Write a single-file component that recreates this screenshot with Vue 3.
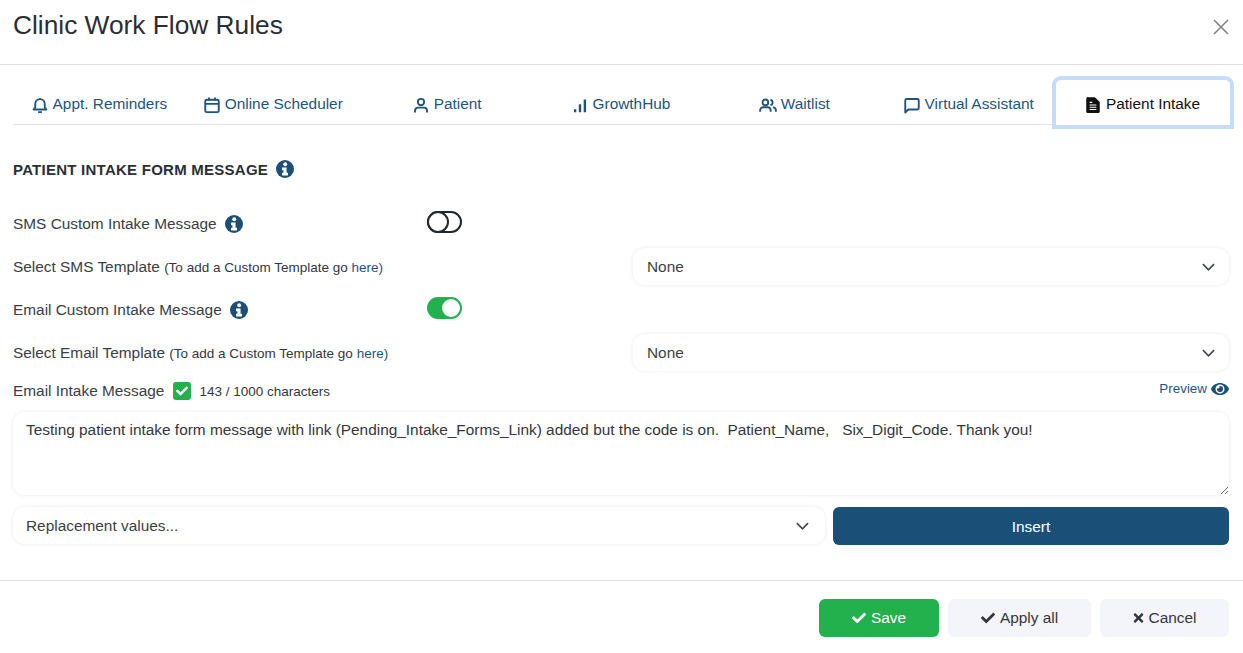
<script setup>
const tabs = [
  { label: 'Appt. Reminders', icon: 'bell' },
  { label: 'Online Scheduler', icon: 'calendar' },
  { label: 'Patient', icon: 'person' },
  { label: 'GrowthHub', icon: 'bars' },
  { label: 'Waitlist', icon: 'people' },
  { label: 'Virtual Assistant', icon: 'chat' },
  { label: 'Patient Intake', icon: 'doc', active: true }
]

const checkPath = 'M173.898 439.404l-166.4-166.4c-9.997-9.997-9.997-26.206 0-36.204l36.203-36.204c9.997-9.998 26.207-9.998 36.204 0L192 312.69 432.095 72.596c9.997-9.997 26.207-9.997 36.204 0l36.203 36.204c9.997 9.997 9.997 26.206 0 36.204l-294.4 294.401c-9.998 9.997-26.207 9.997-36.204-.001z'
const timesPath = 'M242.72 256l100.07-100.07c12.28-12.28 12.28-32.19 0-44.48l-22.24-22.24c-12.28-12.28-32.19-12.28-44.48 0L176 189.28 75.93 89.21c-12.28-12.28-32.19-12.28-44.48 0L9.21 111.45c-12.28 12.28-12.28 32.19 0 44.48L109.28 256 9.21 356.07c-12.28 12.28-12.28 32.19 0 44.48l22.24 22.24c12.28 12.28 32.2 12.28 44.48 0L176 322.72l100.07 100.07c12.28 12.28 32.2 12.28 44.48 0l22.24-22.24c12.28-12.28 12.28-32.19 0-44.48L242.72 256z'
const eyePath = 'M572.52 241.4C518.29 135.59 410.93 64 288 64S57.68 135.64 3.48 241.41a32.35 32.35 0 0 0 0 29.19C57.71 376.41 165.07 448 288 448s230.32-71.64 284.52-177.41a32.35 32.35 0 0 0 0-29.19zM288 400a144 144 0 1 1 144-144 143.93 143.93 0 0 1-144 144zm0-240a95.31 95.31 0 0 0-25.31 3.79 47.85 47.85 0 0 1-66.9 66.9A95.78 95.78 0 1 0 288 160z'
const message = 'Testing patient intake form message with link (Pending_Intake_Forms_Link) added but the code is on.  Patient_Name,   Six_Digit_Code. Thank you!'
</script>

<template>
  <div class="modal">
    <header class="head">
      <h1>Clinic Work Flow Rules</h1>
      <svg class="close" viewBox="0 0 16 16"><path d="M1 1l14 14M15 1L1 15" /></svg>
    </header>

    <nav class="tabs">
      <div v-for="tab in tabs" :key="tab.label" :class="['tab', { active: tab.active }]">
        <svg class="tab-icon" viewBox="0 0 24 24">
          <template v-if="tab.icon === 'bell'">
            <path d="M3.500 18h17l-2.200-3v-4.500a6.300 6.300 0 0 0-12.600 0V15z" />
            <path d="M9.500 21.500h5M12 3v1" />
          </template>
          <template v-else-if="tab.icon === 'calendar'">
            <rect x="3" y="5" width="18" height="16.500" rx="2" />
            <path d="M3 10.500h18M8 2V6M16 2V6" />
          </template>
          <template v-else-if="tab.icon === 'person'">
            <circle cx="12" cy="8" r="4.200" />
            <path d="M4 22v-2.500a4 4 0 0 1 4-4h8a4 4 0 0 1 4 4V22" />
          </template>
          <template v-else-if="tab.icon === 'bars'">
            <path class="thick" d="M5.500 21.500v-4M12 21.500V11M18.500 21.500V4.500" />
          </template>
          <template v-else-if="tab.icon === 'people'">
            <circle cx="8.500" cy="8.500" r="3.800" />
            <path d="M15.200 4.800a3.800 3.800 0 0 1 0 7.400" />
            <path d="M1.500 21v-2a4 4 0 0 1 4-4h6a4 4 0 0 1 4 4v2M18.500 15.200a4 4 0 0 1 4 3.800v2" />
          </template>
          <template v-else-if="tab.icon === 'chat'">
            <path d="M3 22V6a2 2 0 0 1 2-2h14a2 2 0 0 1 2 2v10a2 2 0 0 1-2 2H7z" />
          </template>
          <template v-else>
            <path class="solid" d="M6 1.500h8.500L21 8v13a1.500 1.500 0 0 1-1.500 1.500h-15A1.500 1.500 0 0 1 3 21V4a2.500 2.500 0 0 1 3-2.500z" />
            <path class="cut" d="M7.500 12h9M7.500 15h9M7.500 18h9M7.500 8.500h3.500" />
          </template>
        </svg>
        <span>{{ tab.label }}</span>
      </div>
    </nav>

    <main class="body">
      <h2 class="section">
        <span>PATIENT INTAKE FORM MESSAGE</span>
        <svg class="info" viewBox="0 0 512 512">
          <circle cx="256" cy="256" r="256" />
          <g class="info-i">
            <circle cx="262" cy="122" r="56" />
            <path d="M172 212h128v152h40v76H172v-76h40v-76h-40z" />
          </g>
        </svg>
      </h2>

      <div class="row switch-row first">
        <div class="label-col">
          <span>SMS Custom Intake Message</span>
          <svg class="info" viewBox="0 0 512 512">
            <circle cx="256" cy="256" r="256" />
            <g class="info-i">
              <circle cx="262" cy="122" r="56" />
              <path d="M172 212h128v152h40v76H172v-76h40v-76h-40z" />
            </g>
          </svg>
        </div>
        <span class="toggle"></span>
      </div>

      <div class="row select-row">
        <div class="label-col">
          Select SMS Template <small>(To add a Custom Template go <a>here)</a></small>
        </div>
        <div class="select">
          <span>None</span>
          <svg class="chev" viewBox="0 0 14 8"><path d="M1 1l6 6 6-6" /></svg>
        </div>
      </div>

      <div class="row switch-row">
        <div class="label-col">
          <span>Email Custom Intake Message</span>
          <svg class="info" viewBox="0 0 512 512">
            <circle cx="256" cy="256" r="256" />
            <g class="info-i">
              <circle cx="262" cy="122" r="56" />
              <path d="M172 212h128v152h40v76H172v-76h40v-76h-40z" />
            </g>
          </svg>
        </div>
        <span class="toggle on"></span>
      </div>

      <div class="row select-row">
        <div class="label-col">
          Select Email Template <small>(To add a Custom Template go <a>here)</a></small>
        </div>
        <div class="select">
          <span>None</span>
          <svg class="chev" viewBox="0 0 14 8"><path d="M1 1l6 6 6-6" /></svg>
        </div>
      </div>

      <div class="row msg-row">
        <div class="msg-label">
          <span>Email Intake Message</span>
          <span class="checkbox">
            <svg viewBox="0 0 512 512"><path :d="checkPath" /></svg>
          </span>
          <small>143 / 1000 characters</small>
        </div>
        <a class="preview">
          <span>Preview</span>
          <svg viewBox="0 0 576 512"><path :d="eyePath" /></svg>
        </a>
      </div>

      <textarea class="message" :value="message"></textarea>

      <div class="insert-row">
        <div class="select replace">
          <span>Replacement values...</span>
          <svg class="chev" viewBox="0 0 14 8"><path d="M1 1l6 6 6-6" /></svg>
        </div>
        <button class="insert">Insert</button>
      </div>
    </main>

    <footer class="foot">
      <button class="btn save">
        <svg viewBox="0 0 512 512"><path :d="checkPath" /></svg>
        Save
      </button>
      <button class="btn apply">
        <svg viewBox="0 0 512 512"><path :d="checkPath" /></svg>
        Apply all
      </button>
      <button class="btn cancel">
        <svg viewBox="0 0 352 512"><path :d="timesPath" /></svg>
        Cancel
      </button>
    </footer>
  </div>
</template>

<style scoped>
.modal {
  width: 1243px;
  height: 653px;
  background: #fff;
  color: #3a3e45;
  font-family: "Liberation Sans", Arial, sans-serif;
  font-size: 15.4px;
  overflow: hidden;
}

.head {
  height: 64px;
  display: flex;
  justify-content: space-between;
  padding: 0 13px;
  border-bottom: 1px solid #dee2e6;
}

.head h1 {
  margin: 9px 0 0;
  font-size: 26.3px;
  line-height: 32px;
  font-weight: 400;
  color: #2a2e33;
}

.close {
  width: 16px;
  height: 16px;
  margin: 19px 1px 0 0;
  fill: none;
  stroke: #808080;
  stroke-width: 1.500;
}

.tabs {
  display: grid;
  grid-template-columns: repeat(7, 1fr);
  margin: 15px 13px 0 13px;
  width: 1217px;
  height: 44px;
  border-bottom: 1px solid #dee2e6;
}

.tab {
  height: 44px;
  padding: 3px 2px 0 0;
  box-sizing: border-box;
  display: flex;
  align-items: center;
  justify-content: center;
  gap: 4px;
  color: #1f5480;
}

.tab.active {
  height: 45px;
  padding-top: 2px;
  color: #111;
  background: #fff;
  box-shadow: 0 0 0 4px #c6dcfb;
  border-radius: 5px 5px 0 0;
  position: relative;
}

.tab-icon {
  width: 18px;
  height: 18px;
  margin-top: 2px;
  fill: none;
  stroke: currentColor;
  stroke-width: 2.500;
  stroke-linejoin: round;
}

.tab-icon .thick {
  stroke-width: 3.200;
}

.tab-icon .solid {
  fill: #111;
  stroke: none;
}

.tab-icon .cut {
  stroke: #fff;
  stroke-width: 1.600;
}

.body {
  padding: 0 14px 0 13px;
}

.section {
  display: flex;
  align-items: center;
  gap: 8px;
  margin: 31px 0 0;
  height: 26px;
  font-size: 15px;
  letter-spacing: 0.25px;
  font-weight: 700;
  color: #2b2f36;
}

.info {
  width: 18px;
  height: 18px;
  flex-shrink: 0;
  fill: #1a4f78;
}

.info-i {
  fill: #fff;
}

.row {
  display: flex;
  align-items: center;
}

.switch-row {
  height: 36px;
}

.switch-row.first {
  margin-top: 23px;
}

.select-row {
  height: 37px;
  margin-top: 7px;
  margin-bottom: 6px;
}

.label-col {
  width: 414px;
  flex-shrink: 0;
  display: flex;
  align-items: center;
  gap: 8px;
}

.switch-row .label-col {
  padding-top: 2px;
}

.select-row .label-col {
  display: block;
  width: 620px;
}

small {
  font-size: 13.5px;
  color: #33373d;
}

a {
  color: #1f5480;
}

.toggle {
  width: 35px;
  height: 22px;
  margin-top: -2px;
  box-sizing: border-box;
  border: 2px solid #23272e;
  border-radius: 11px;
  position: relative;
}

.toggle::after {
  content: "";
  position: absolute;
  left: -2px;
  top: -2px;
  width: 22px;
  height: 22px;
  box-sizing: border-box;
  border: 2px solid #23272e;
  border-radius: 50%;
  background: #fff;
}

.toggle.on {
  background: #22b14c;
  border-color: #22b14c;
}

.toggle.on::after {
  left: auto;
  right: 0;
  top: 0;
  width: 18px;
  height: 18px;
  border: 0;
}

.select {
  flex: 1;
  height: 37px;
  display: flex;
  align-items: center;
  justify-content: space-between;
  padding: 0 14px;
  border-radius: 12px;
  background: #fff;
  box-shadow: 0 0 4px rgba(0, 0, 0, 0.09);
  color: #3a3f46;
}

.chev {
  width: 13px;
  height: 8px;
  fill: none;
  stroke: #43474e;
  stroke-width: 1.800;
}

.msg-row {
  height: 38px;
  margin-top: -5px;
  justify-content: space-between;
}

.msg-label {
  display: flex;
  align-items: center;
}

.checkbox {
  width: 18px;
  height: 18px;
  margin: 0 8px 0 9px;
  border-radius: 3px;
  background: #22b14c;
  display: flex;
  align-items: center;
  justify-content: center;
}

.checkbox svg {
  width: 12px;
  height: 12px;
  fill: #fff;
}

.preview {
  display: flex;
  align-items: center;
  gap: 4px;
  margin-top: -5px;
  font-size: 13.4px;
}

.preview svg {
  width: 18px;
  height: 16px;
  fill: #1a4f78;
}

.message {
  display: block;
  width: 100%;
  height: 83px;
  margin-top: 2px;
  box-sizing: border-box;
  padding: 9px 13px;
  border: 0;
  outline: 0;
  border-radius: 12px;
  box-shadow: 0 0 4px rgba(0, 0, 0, 0.09);
  font-family: inherit;
  font-size: 15.4px;
  line-height: 18px;
  color: #33373d;
}

.insert-row {
  display: flex;
  gap: 8px;
  margin-top: 12px;
}

.replace {
  flex: none;
  width: 783px;
  padding: 0 16px 0 13px;
}

.insert {
  flex: 1;
  height: 38px;
  padding-top: 2px;
  border: 0;
  border-radius: 6px;
  background: #1a4f78;
  color: #fff;
  font-family: inherit;
  font-size: 15.4px;
}

.foot {
  display: flex;
  justify-content: flex-end;
  gap: 9px;
  margin-top: 35px;
  padding: 18px 14px 0 0;
  border-top: 1px solid #dee2e6;
}

.btn {
  height: 38px;
  border: 0;
  border-radius: 6px;
  font-family: inherit;
  font-size: 15.4px;
  display: flex;
  align-items: center;
  justify-content: center;
  gap: 5px;
}

.btn svg {
  width: 14px;
  height: 14px;
  fill: currentColor;
}

.save {
  width: 120px;
  background: #22b14c;
  color: #fff;
}

.apply {
  width: 143px;
  background: #f4f5fa;
  color: #33373d;
}

.cancel {
  width: 129px;
  background: #f4f5fa;
  color: #33373d;
}

.cancel svg {
  width: 11px;
}
</style>

<style>
html, body {
  margin: 0;
  background: #fff;
}
</style>
